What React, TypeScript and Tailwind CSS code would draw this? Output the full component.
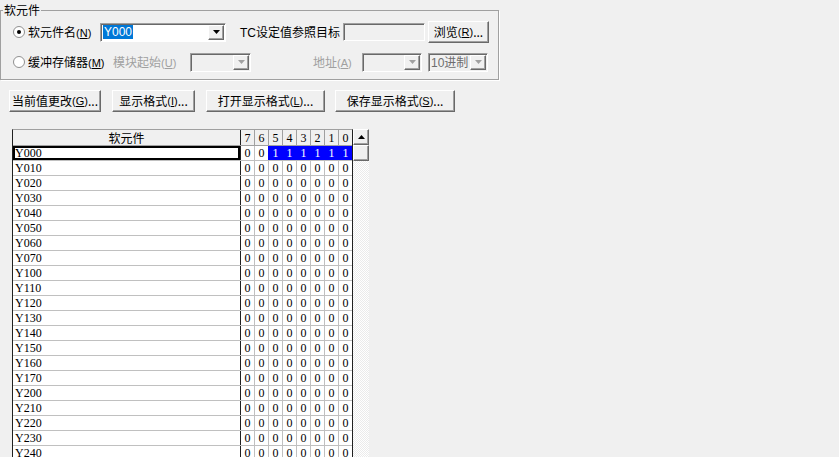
import type { ReactNode } from 'react';

const ui = "font-['Noto_Sans_CJK_SC','Microsoft_YaHei',sans-serif] text-[12px] leading-[16px]";
const mono = "font-['Liberation_Serif',serif] text-[12px] leading-[14px]";

const raised =
  'border border-t-white border-l-white border-r-[#696969] border-b-[#696969] shadow-[inset_-1px_-1px_0_#a0a0a0] bg-[#f0f0f0]';
const sunken =
  'border border-t-[#a0a0a0] border-l-[#a0a0a0] border-r-white border-b-white shadow-[inset_1px_1px_0_#696969]';

function Radio({ checked }: { checked?: boolean }) {
  return (
    <svg width="12" height="12" viewBox="0 0 12 12" className="shrink-0">
      <circle cx="6" cy="6" r="5.5" fill="#fff" stroke="#8f8f8f" />
      {checked && <circle cx="6" cy="6" r="2" fill="#000" />}
    </svg>
  );
}

function Arrow({ disabled }: { disabled?: boolean }) {
  return (
    <svg width="7" height="4" viewBox="0 0 7 4">
      <path d="M0 0h7L3.5 4z" fill={disabled ? '#a0a0a0' : '#000'} />
    </svg>
  );
}

function Combo({
  width,
  disabled,
  children,
}: {
  width: string;
  disabled?: boolean;
  children?: ReactNode;
}) {
  return (
    <div
      className={`flex h-[19px] items-stretch ${sunken} ${width} ${
        disabled ? 'bg-[#f0f0f0]' : 'bg-white'
      }`}
    >
      <div className="flex flex-1 items-center overflow-hidden pl-[1px]">{children}</div>
      <div className={`m-[1px] flex w-[16px] items-center justify-center ${raised}`}>
        <Arrow disabled={disabled} />
      </div>
    </div>
  );
}

function Button({ width, children }: { width: string; children: ReactNode }) {
  return (
    <div className={`flex h-[22px] items-center justify-center ${raised} ${width} ${ui}`}>
      {children}
    </div>
  );
}

function Acc({ k }: { k: string }) {
  return (
    <span className="font-['Liberation_Sans',sans-serif] text-[11px]">
      (<u>{k}</u>)
    </span>
  );
}

const devices = Array.from({ length: 21 }, (_, i) => `Y${i.toString(8).padStart(2, '0')}0`);

export default function App() {
  return (
    <div className={`flex h-[457px] w-[839px] flex-col overflow-hidden bg-[#f0f0f0] text-black ${ui}`}>
      <fieldset className="mt-[2px] w-[499px] border border-[#a0a0a0] pb-[6px] shadow-[1px_1px_0_#fff]">
        <legend className="ml-[2px] px-[1px]">软元件</legend>

        <div className="mt-[3px] flex h-[22px] items-center pl-[12px]">
          <Radio checked />
          <span className="ml-[3px] w-[72px]">
            软元件名<Acc k="N" />
          </span>
          <Combo width="w-[126px]">
            <span className="ml-[1px] bg-[#0078d7] px-[1px] font-['Liberation_Sans',sans-serif] text-[12px] leading-[14px] text-white">
              Y000
            </span>
          </Combo>
          <span className="ml-[14px] w-[103px]">
            <span className="font-['Liberation_Sans',sans-serif]">TC</span>设定值参照目标
          </span>
          <div className={`h-[18px] w-[82px] bg-[#f0f0f0] ${sunken}`} />
          <div className="ml-[3px]">
            <Button width="w-[61px]">
              浏览<Acc k="R" />...
            </Button>
          </div>
        </div>

        <div className="mt-[8px] flex h-[22px] items-center pl-[12px]">
          <Radio />
          <span className="ml-[3px] w-[85px]">
            缓冲存储器<Acc k="M" />
          </span>
          <span className="w-[77px] text-[#a0a0a0]">
            模块起始<Acc k="U" />
          </span>
          <Combo width="w-[61px]" disabled />
          <span className="ml-[62px] w-[49px] text-[#a0a0a0]">
            地址<Acc k="A" />
          </span>
          <Combo width="w-[60px]" disabled />
          <div className="ml-[6px]">
            <Combo width="w-[60px]" disabled>
              <span className="pl-[1px] text-[12px] text-[#6d6d6d]">
                <span className="font-['Liberation_Sans',sans-serif]">10</span>进制
              </span>
            </Combo>
          </div>
        </div>
      </fieldset>

      <div className="mt-[10px] flex">
        <div className="ml-[9px]">
          <Button width="w-[92px]">
            当前值更改<Acc k="G" />...
          </Button>
        </div>
        <div className="ml-[11px]">
          <Button width="w-[83px]">
            显示格式<Acc k="I" />...
          </Button>
        </div>
        <div className="ml-[11px]">
          <Button width="w-[119px]">
            打开显示格式<Acc k="L" />...
          </Button>
        </div>
        <div className="ml-[10px]">
          <Button width="w-[120px]">
            保存显示格式<Acc k="S" />...
          </Button>
        </div>
      </div>

      <div className="ml-[12px] mt-[17px] flex min-h-0 flex-1">
        <div className="flex w-[341px] flex-col border-x border-t border-x-[#202020] border-t-[#a0a0a0] bg-white">
          {/* header */}
          <div className="flex h-[16px] border-b border-[#a0a0a0] bg-[#f0f0f0]">
            <div className="flex w-[227px] items-center justify-center leading-[15px]">软元件</div>
            {[7, 6, 5, 4, 3, 2, 1, 0].map((b, i) => (
              <div
                key={b}
                className={`flex w-[14px] items-center justify-center border-l ${mono} ${
                  i === 0 ? 'border-[#202020]' : 'border-[#a0a0a0]'
                } ${i === 7 ? 'w-[13px]' : ''}`}
              >
                {b}
              </div>
            ))}
          </div>
          {devices.map((d, r) => (
            <div key={d} className="flex h-[15px] shrink-0 border-b border-[#c0c0c0]">
              <div
                className={`flex w-[227px] items-center pl-[2px] ${mono} ${
                  r === 0 ? 'shadow-[inset_0_0_0_2px_#000]' : ''
                }`}
              >
                {d}
              </div>
              {[7, 6, 5, 4, 3, 2, 1, 0].map((b, i) => {
                const on = r === 0 && b < 6;
                return (
                  <div
                    key={b}
                    className={`flex w-[14px] items-center justify-center border-l ${mono} ${
                      i === 0 ? 'border-[#202020]' : on ? 'border-[#0000ff]' : 'border-[#c0c0c0]'
                    } ${on ? 'bg-[#0000ff] text-white' : ''} ${i === 7 ? 'w-[13px]' : ''}`}
                  >
                    {on ? '1' : '0'}
                  </div>
                );
              })}
            </div>
          ))}
        </div>

        <div className="flex w-[16px] flex-col">
          <div className={`flex h-[16px] items-center justify-center ${raised}`}>
            <svg width="7" height="4" viewBox="0 0 7 4">
              <path d="M3.5 0L7 4H0z" fill="#000" />
            </svg>
          </div>
          <div className={`h-[16px] ${raised}`} />
          <div className="flex-1 bg-[repeating-conic-gradient(#ffffff_0_25%,#ebebeb_0_50%)] bg-[length:2px_2px]" />
        </div>
      </div>
    </div>
  );
}
